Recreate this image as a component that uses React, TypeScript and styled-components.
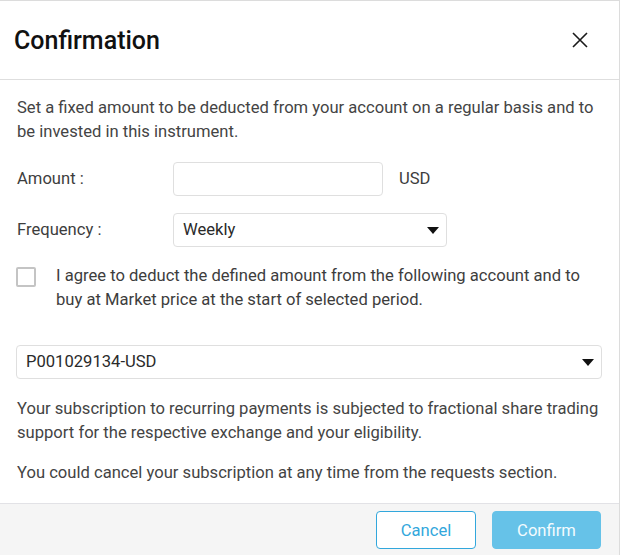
import React, { useState } from "react";
import styled, { createGlobalStyle } from "styled-components";

const GlobalStyle = createGlobalStyle`
  html, body {
    margin: 0;
    padding: 0;
    background: #fff;
    font-family: Roboto, "Liberation Sans", sans-serif;
  }
`;

const Dialog = styled.div`
  width: 619px;
  height: 554px;
  border-top: 1px solid #dcdcdc;
  border-right: 1px solid #dcdcdc;
  display: flex;
  flex-direction: column;
  background: #fff;
`;

const Header = styled.div`
  height: 78px;
  flex: none;
  display: flex;
  align-items: center;
  justify-content: space-between;
  padding: 0 31px 0 14px;
  border-bottom: 1px solid #dedede;
`;

const Title = styled.h2`
  margin: 0;
  font-size: 25px;
  font-weight: 500;
  color: #111;
`;

const CloseButton = styled.button`
  border: none;
  background: none;
  padding: 0;
  width: 16px;
  height: 16px;
  display: flex;
  cursor: pointer;
`;

const Body = styled.div`
  flex: 1;
  padding: 16px 17px 0 16px;
  font-size: 16.6px;
  line-height: 24px;
  color: #444;
`;

const Text = styled.p<{ $gap?: number; $top?: number }>`
  margin: ${(p) => p.$top ?? 0}px 0 ${(p) => p.$gap ?? 0}px;
  padding-left: 1px;
`;

const FormRow = styled.div<{ $gap?: number }>`
  display: flex;
  align-items: center;
  margin-bottom: ${(p) => p.$gap ?? 0}px;
`;

const Label = styled.label`
  width: 156px;
  padding-left: 1px;
  color: #3d3d3d;
`;

const Input = styled.input`
  box-sizing: border-box;
  width: 210px;
  height: 34px;
  border: 1px solid #dfdfdf;
  border-radius: 4px;
  padding: 0 8px;
  font: inherit;
  outline: none;
`;

const Unit = styled.span`
  margin-left: 16px;
  color: #3d3d3d;
`;

const SelectBox = styled.div<{ $width?: string }>`
  box-sizing: border-box;
  width: ${(p) => p.$width ?? "100%"};
  height: 34px;
  border: 1px solid #dfdfdf;
  border-radius: 4px;
  padding: 0 7px 0 9px;
  display: flex;
  align-items: center;
  justify-content: space-between;
  color: #2a2a2a;
  cursor: pointer;
`;

const Caret = styled.span`
  width: 0;
  height: 0;
  border-left: 6px solid transparent;
  border-right: 6px solid transparent;
  border-top: 7px solid #111;
`;

const CheckRow = styled.div`
  display: flex;
  align-items: flex-start;
  margin-bottom: 33px;
`;

const Check = styled.span<{ $on: boolean }>`
  box-sizing: border-box;
  flex: none;
  width: 20px;
  height: 20px;
  margin-top: 3px;
  margin-right: 20px;
  border: 2px solid #c4c4c4;
  border-radius: 2px;
  background: ${(p) => (p.$on ? "#29abe2" : "#fff")};
  cursor: pointer;
`;

const CheckText = styled.span`
  color: #3d3d3d;
`;

const Footer = styled.div`
  height: 52px;
  flex: none;
  box-sizing: border-box;
  padding: 1px 18px 0 0;
  border-top: 1px solid #e2e2e6;
  background: #f5f5f5;
  display: flex;
  align-items: center;
  justify-content: flex-end;
  gap: 16px;
`;

const Button = styled.button<{ $primary?: boolean; $width: number }>`
  box-sizing: border-box;
  width: ${(p) => p.$width}px;
  height: 38px;
  border-radius: 4px;
  font-family: inherit;
  font-size: 16.6px;
  cursor: pointer;
  border: 1px solid ${(p) => (p.$primary ? "#66c2e8" : "#32a7dc")};
  background: ${(p) => (p.$primary ? "#66c2e8" : "#fff")};
  color: ${(p) => (p.$primary ? "#f4fbfe" : "#32a7dc")};
`;

const App: React.FC = () => {
  const [agree, setAgree] = useState(false);

  return (
    <>
      <GlobalStyle />
      <Dialog>
        <Header>
          <Title>Confirmation</Title>
          <CloseButton aria-label="Close">
            <svg width="16" height="16" viewBox="0 0 16 16">
              <path d="M1 1L15 15M15 1L1 15" stroke="#1a1a1a" strokeWidth="1.6" />
            </svg>
          </CloseButton>
        </Header>
        <Body>
          <Text $gap={18}>
            Set a fixed amount to be deducted from your account on a regular basis and to be
            invested in this instrument.
          </Text>
          <FormRow $gap={17}>
            <Label>Amount :</Label>
            <Input />
            <Unit>USD</Unit>
          </FormRow>
          <FormRow $gap={17}>
            <Label>Frequency :</Label>
            <SelectBox $width="274px">
              Weekly
              <Caret />
            </SelectBox>
          </FormRow>
          <CheckRow>
            <Check $on={agree} onClick={() => setAgree(!agree)} />
            <CheckText>
              I agree to deduct the defined amount from the following account and to buy at
              Market price at the start of selected period.
            </CheckText>
          </CheckRow>
          <SelectBox>
            P001029134-USD
            <Caret />
          </SelectBox>
          <Text $top={18} $gap={16}>
            Your subscription to recurring payments is subjected to fractional share trading
            support for the respective exchange and your eligibility.
          </Text>
          <Text>You could cancel your subscription at any time from the requests section.</Text>
        </Body>
        <Footer>
          <Button $width={100}>Cancel</Button>
          <Button $primary $width={109}>
            Confirm
          </Button>
        </Footer>
      </Dialog>
    </>
  );
};

export default App;
